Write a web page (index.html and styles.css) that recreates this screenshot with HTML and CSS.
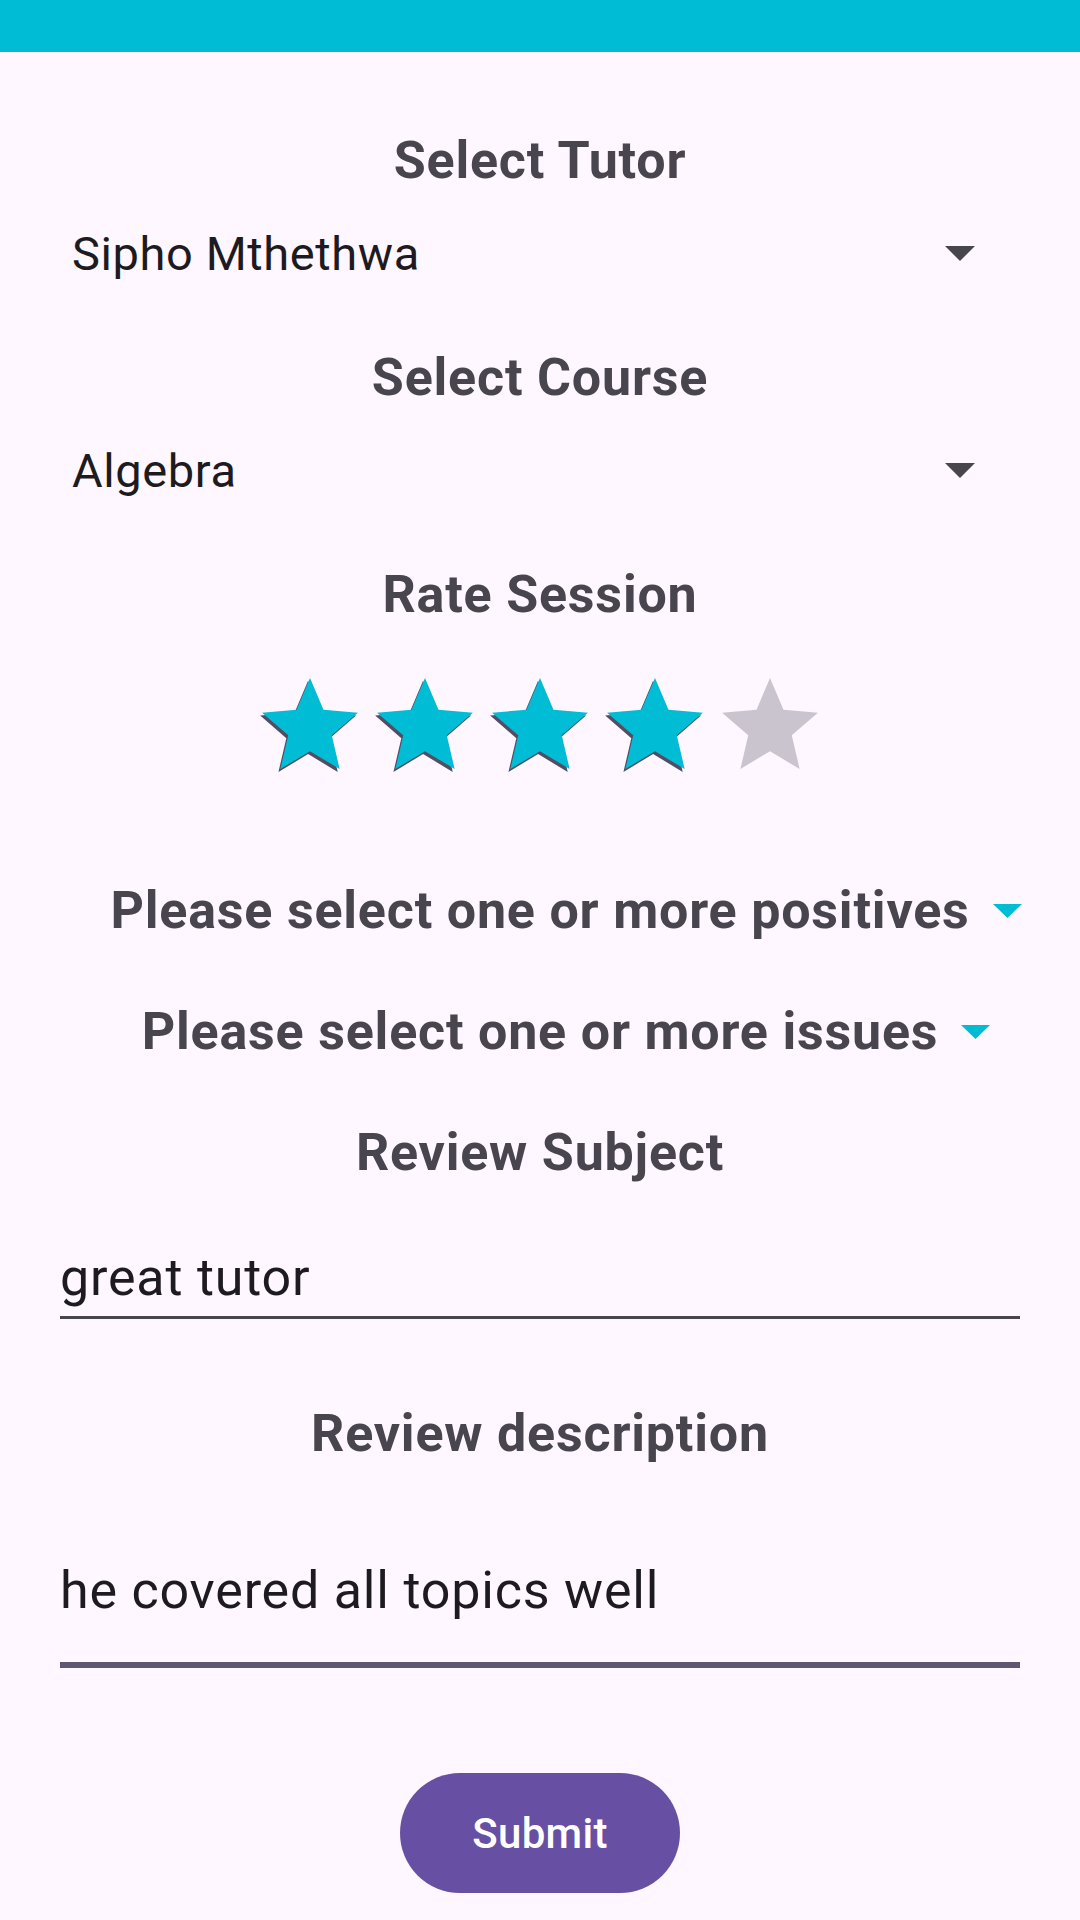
FILE: index.html
```html
<!DOCTYPE html>
<html lang="en">
<head>
<meta charset="utf-8">
<title>Rate Session</title>
<link rel="stylesheet" href="styles.css">
</head>
<body>
<div class="topbar"></div>
<main class="form">
  <h2 class="label label-first">Select Tutor</h2>
  <div class="spinner">
    <span class="spinner-text">Sipho Mthethwa</span>
    <svg class="spinner-arrow" width="30" height="15" viewBox="0 0 30 15"><polygon points="0,0 30,0 15,15"/></svg>
  </div>

  <h2 class="label label-after-spinner">Select Course</h2>
  <div class="spinner">
    <span class="spinner-text">Algebra</span>
    <svg class="spinner-arrow" width="30" height="15" viewBox="0 0 30 15"><polygon points="0,0 30,0 15,15"/></svg>
  </div>

  <h2 class="label label-after-spinner">Rate Session</h2>
  <div class="stars">
    <svg class="star" width="96" height="93" viewBox="2 1.8 20 19.4"><path class="star-shadow" transform="translate(-0.4 0.6)" d="M12 17.27L18.18 21l-1.64-7.03L22 9.24l-7.19-.61L12 2 9.19 8.63 2 9.24l5.46 4.73L5.82 21z"/><path class="star-on" d="M12 17.27L18.18 21l-1.64-7.03L22 9.24l-7.19-.61L12 2 9.19 8.63 2 9.24l5.46 4.73L5.82 21z"/></svg>
    <svg class="star" width="96" height="93" viewBox="2 1.8 20 19.4"><path class="star-shadow" transform="translate(-0.4 0.6)" d="M12 17.27L18.18 21l-1.64-7.03L22 9.24l-7.19-.61L12 2 9.19 8.63 2 9.24l5.46 4.73L5.82 21z"/><path class="star-on" d="M12 17.27L18.18 21l-1.64-7.03L22 9.24l-7.19-.61L12 2 9.19 8.63 2 9.24l5.46 4.73L5.82 21z"/></svg>
    <svg class="star" width="96" height="93" viewBox="2 1.8 20 19.4"><path class="star-shadow" transform="translate(-0.4 0.6)" d="M12 17.27L18.18 21l-1.64-7.03L22 9.24l-7.19-.61L12 2 9.19 8.63 2 9.24l5.46 4.73L5.82 21z"/><path class="star-on" d="M12 17.27L18.18 21l-1.64-7.03L22 9.24l-7.19-.61L12 2 9.19 8.63 2 9.24l5.46 4.73L5.82 21z"/></svg>
    <svg class="star" width="96" height="93" viewBox="2 1.8 20 19.4"><path class="star-shadow" transform="translate(-0.4 0.6)" d="M12 17.27L18.18 21l-1.64-7.03L22 9.24l-7.19-.61L12 2 9.19 8.63 2 9.24l5.46 4.73L5.82 21z"/><path class="star-on" d="M12 17.27L18.18 21l-1.64-7.03L22 9.24l-7.19-.61L12 2 9.19 8.63 2 9.24l5.46 4.73L5.82 21z"/></svg>
    <svg class="star" width="96" height="93" viewBox="2 1.8 20 19.4"><path class="star-off" d="M12 17.27L18.18 21l-1.64-7.03L22 9.24l-7.19-.61L12 2 9.19 8.63 2 9.24l5.46 4.73L5.82 21z"/></svg>
  </div>

  <div class="multi multi-positives">
    <span class="multi-text">Please select one or more positives</span>
    <svg class="multi-arrow" width="29" height="14" viewBox="0 0 29 14"><polygon points="0,0 29,0 14.5,14"/></svg>
  </div>
  <div class="multi multi-issues">
    <span class="multi-text">Please select one or more issues</span>
    <svg class="multi-arrow" width="29" height="14" viewBox="0 0 29 14"><polygon points="0,0 29,0 14.5,14"/></svg>
  </div>

  <h2 class="label label-subject">Review Subject</h2>
  <div class="field field-subject">great tutor</div>

  <h2 class="label label-desc">Review description</h2>
  <div class="field field-desc">he covered all topics well</div>

  <button class="submit" type="button">Submit</button>
</main>
</body>
</html>
```
FILE: styles.css
```css
html, body {
  margin: 0;
  padding: 0;
}

body {
  background: #fef7ff;
  font-family: Roboto, "Noto Sans", sans-serif;
  width: 1080px;
  height: 1920px;
  overflow: hidden;
}

.topbar {
  height: 52px;
  background: #00bcd4;
}

.form {
  display: flex;
  flex-direction: column;
}

.label {
  margin: 0;
  font-size: 52px;
  line-height: 61px;
  font-weight: 700;
  letter-spacing: 0.8px;
  color: #49454f;
  text-align: center;
}

.label-first { margin-top: 78px; }
.label-after-spinner { margin-top: 66px; }

.spinner {
  margin-top: 35px;
  height: 55px;
  display: flex;
  align-items: center;
  justify-content: space-between;
  padding: 0 105px 0 72px;
}

.spinner-text {
  font-size: 47px;
  line-height: 55px;
  letter-spacing: 0.6px;
  color: #1d1b20;
}

.spinner-arrow polygon { fill: #49454f; }

.stars {
  margin-top: 52px;
  display: flex;
  justify-content: center;
  gap: 19px;
  height: 93px;
}

.star { overflow: visible; display: block; }
.star-on { fill: #00bcd4; }
.star-shadow { fill: #534d63; }
.star-off { fill: #cac4cf; }

.multi {
  display: flex;
  justify-content: center;
  align-items: center;
  gap: 23px;
  padding-left: 52px;
  height: 61px;
}

.multi-positives { margin-top: 110px; }
.multi-issues { margin-top: 60px; }

.multi-text {
  font-size: 52px;
  line-height: 61px;
  font-weight: 700;
  letter-spacing: 0.8px;
  color: #49454f;
  white-space: nowrap;
}

.multi-arrow polygon { fill: #00bcd4; }

.label-subject { margin-top: 60px; }

.field {
  margin: 0 60px;
  font-size: 52px;
  line-height: 61px;
  letter-spacing: 0.8px;
  color: #1d1b20;
}

.field-subject {
  margin-top: 64px;
  padding-bottom: 8px;
  border-bottom: 3px solid #49454f;
}

.label-desc { margin-top: 84px; }

.field-desc {
  margin-top: 96px;
  padding-bottom: 41px;
  border-bottom: 6px solid #5f5772;
}

.submit {
  align-self: center;
  margin-top: 105px;
  width: 280px;
  height: 120px;
  border: none;
  border-radius: 60px;
  background: #6750a4;
  color: #ffffff;
  font-family: Roboto, "Noto Sans", sans-serif;
  font-size: 42px;
  font-weight: 500;
  letter-spacing: 0.3px;
  padding: 0;
}
```
